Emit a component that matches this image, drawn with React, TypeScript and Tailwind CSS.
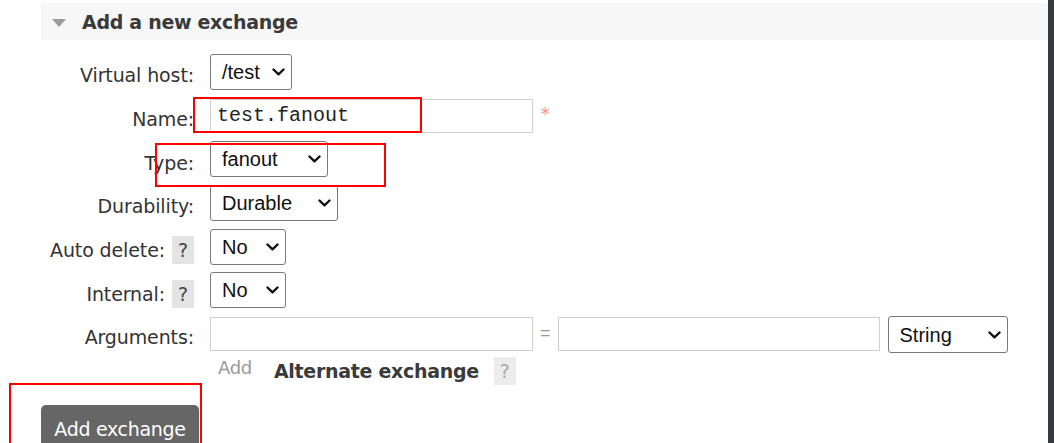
import React from "react";

const labelCls =
  "font-['DejaVu_Sans',Verdana,sans-serif] text-[19px] tracking-[-0.12px] text-[#333] whitespace-nowrap";

function Chevron() {
  return (
    <svg width="13" height="8" viewBox="0 0 13 8" className="shrink-0">
      <path d="M1.5 1.5 L6.5 6.3 L11.5 1.5" stroke="#111" strokeWidth="2.4" fill="none" strokeLinecap="round" strokeLinejoin="round" />
    </svg>
  );
}

function Sel({ text, cls }: { text: string; cls: string }) {
  return (
    <div
      className={
        "flex h-[36px] shrink-0 items-center justify-between rounded-[3px] border border-[#7a7a7a] bg-white pl-[11px] pr-[6px] font-['Liberation_Sans',Arial,sans-serif] text-[20px] text-[#111] " +
        cls
      }
    >
      <span>{text}</span>
      <Chevron />
    </div>
  );
}

function Help({ light }: { light?: boolean }) {
  return (
    <div
      className={
        "flex h-[28px] w-[22px] items-center justify-center font-['DejaVu_Sans',Verdana,sans-serif] text-[19px] " +
        (light ? "bg-[#ececec] text-[#aaa]" : "bg-[#e4e4e4] text-[#444]")
      }
    >
      ?
    </div>
  );
}

function Row({ label, help, children }: { label: string; help?: boolean; children: React.ReactNode }) {
  return (
    <div className="flex h-[36px] items-center">
      <div className="mt-[7px] flex w-[194px] shrink-0 items-center justify-end gap-[7px]">
        <span className={labelCls}>{label}</span>
        {help && <Help />}
      </div>
      <div className="ml-[16px] flex items-center">{children}</div>
    </div>
  );
}

export default function App() {
  return (
    <div className="relative flex h-[443px] w-[1054px] overflow-hidden bg-white">
      <div className="relative flex-1">
        <div className="ml-[41px] mt-[3px] flex h-[37px] items-center bg-[#f7f7f7] pl-[11px] pt-[2px]">
          <svg width="14" height="8" viewBox="0 0 14 8">
            <path d="M0 0 L14 0 L7 8 Z" fill="#9a9a9a" />
          </svg>
          <span className="ml-[16px] font-['DejaVu_Sans',Verdana,sans-serif] text-[19px] font-bold tracking-[-0.3px] text-[#3a3a3a]">
            Add a new exchange
          </span>
        </div>

        <div className="mt-[14px] flex flex-col gap-[7.67px]">
          <Row label="Virtual host:">
            <Sel text="/test" cls="w-[82px]" />
          </Row>
          <Row label="Name:">
            <div className="flex h-[34px] w-[323px] items-center border border-[#cfcfcf] bg-white pl-[6px] font-['Liberation_Mono','Courier_New',monospace] text-[20px] text-[#222]">
              test.fanout
            </div>
            <span className="ml-[8px] -mt-[2px] font-['DejaVu_Sans',sans-serif] text-[17px] text-[#f88]">*</span>
          </Row>
          <Row label="Type:">
            <Sel text="fanout" cls="w-[118px]" />
          </Row>
          <Row label="Durability:">
            <Sel text="Durable" cls="w-[128px]" />
          </Row>
          <Row label="Auto delete:" help>
            <Sel text="No" cls="w-[76px]" />
          </Row>
          <Row label="Internal:" help>
            <Sel text="No" cls="w-[76px]" />
          </Row>
          <Row label="Arguments:">
            <div className="h-[34px] w-[323px] border border-[#cfcfcf] bg-white" />
            <span className="mx-[7px] font-['Liberation_Sans',Arial,sans-serif] text-[18px] text-[#999]">=</span>
            <div className="h-[34px] w-[322px] border border-[#cfcfcf] bg-white" />
            <div className="ml-[8px] mt-[2px]">
              <Sel text="String" cls="w-[120px] h-[37px]" />
            </div>
          </Row>
        </div>

        <div className="ml-[210px] mt-[5px] flex h-[28px] items-center">
          <span className="ml-[8px] -mt-[6px] font-['DejaVu_Sans',Verdana,sans-serif] text-[18px] tracking-[-0.3px] text-[#999]">
            Add
          </span>
          <span className="ml-[22px] mt-[1px] font-['DejaVu_Sans',Verdana,sans-serif] text-[19px] font-bold tracking-[-0.3px] text-[#3a3a3a]">
            Alternate exchange
          </span>
          <div className="ml-[15px]">
            <Help light />
          </div>
        </div>

        <div className="ml-[41px] mt-[20px] flex h-[48px] w-[158px] items-center justify-center rounded-[5px] bg-[#666] font-['DejaVu_Sans',Verdana,sans-serif] text-[19px] tracking-[-0.3px] text-white">
          Add exchange
        </div>

        {/* red annotation boxes */}
        <div className="pointer-events-none absolute left-[193px] top-[97px] h-[36px] w-[229px] border-2 border-[#ff0000]" />
        <div className="pointer-events-none absolute left-[155px] top-[143px] h-[44px] w-[231px] border-2 border-[#ff0000]" />
        <div className="pointer-events-none absolute left-[9px] top-[383px] h-[80px] w-[193px] border-2 border-[#ff0000]" />
      </div>
      <div className="h-full w-[6px] bg-[#353a3e]" />
    </div>
  );
}
